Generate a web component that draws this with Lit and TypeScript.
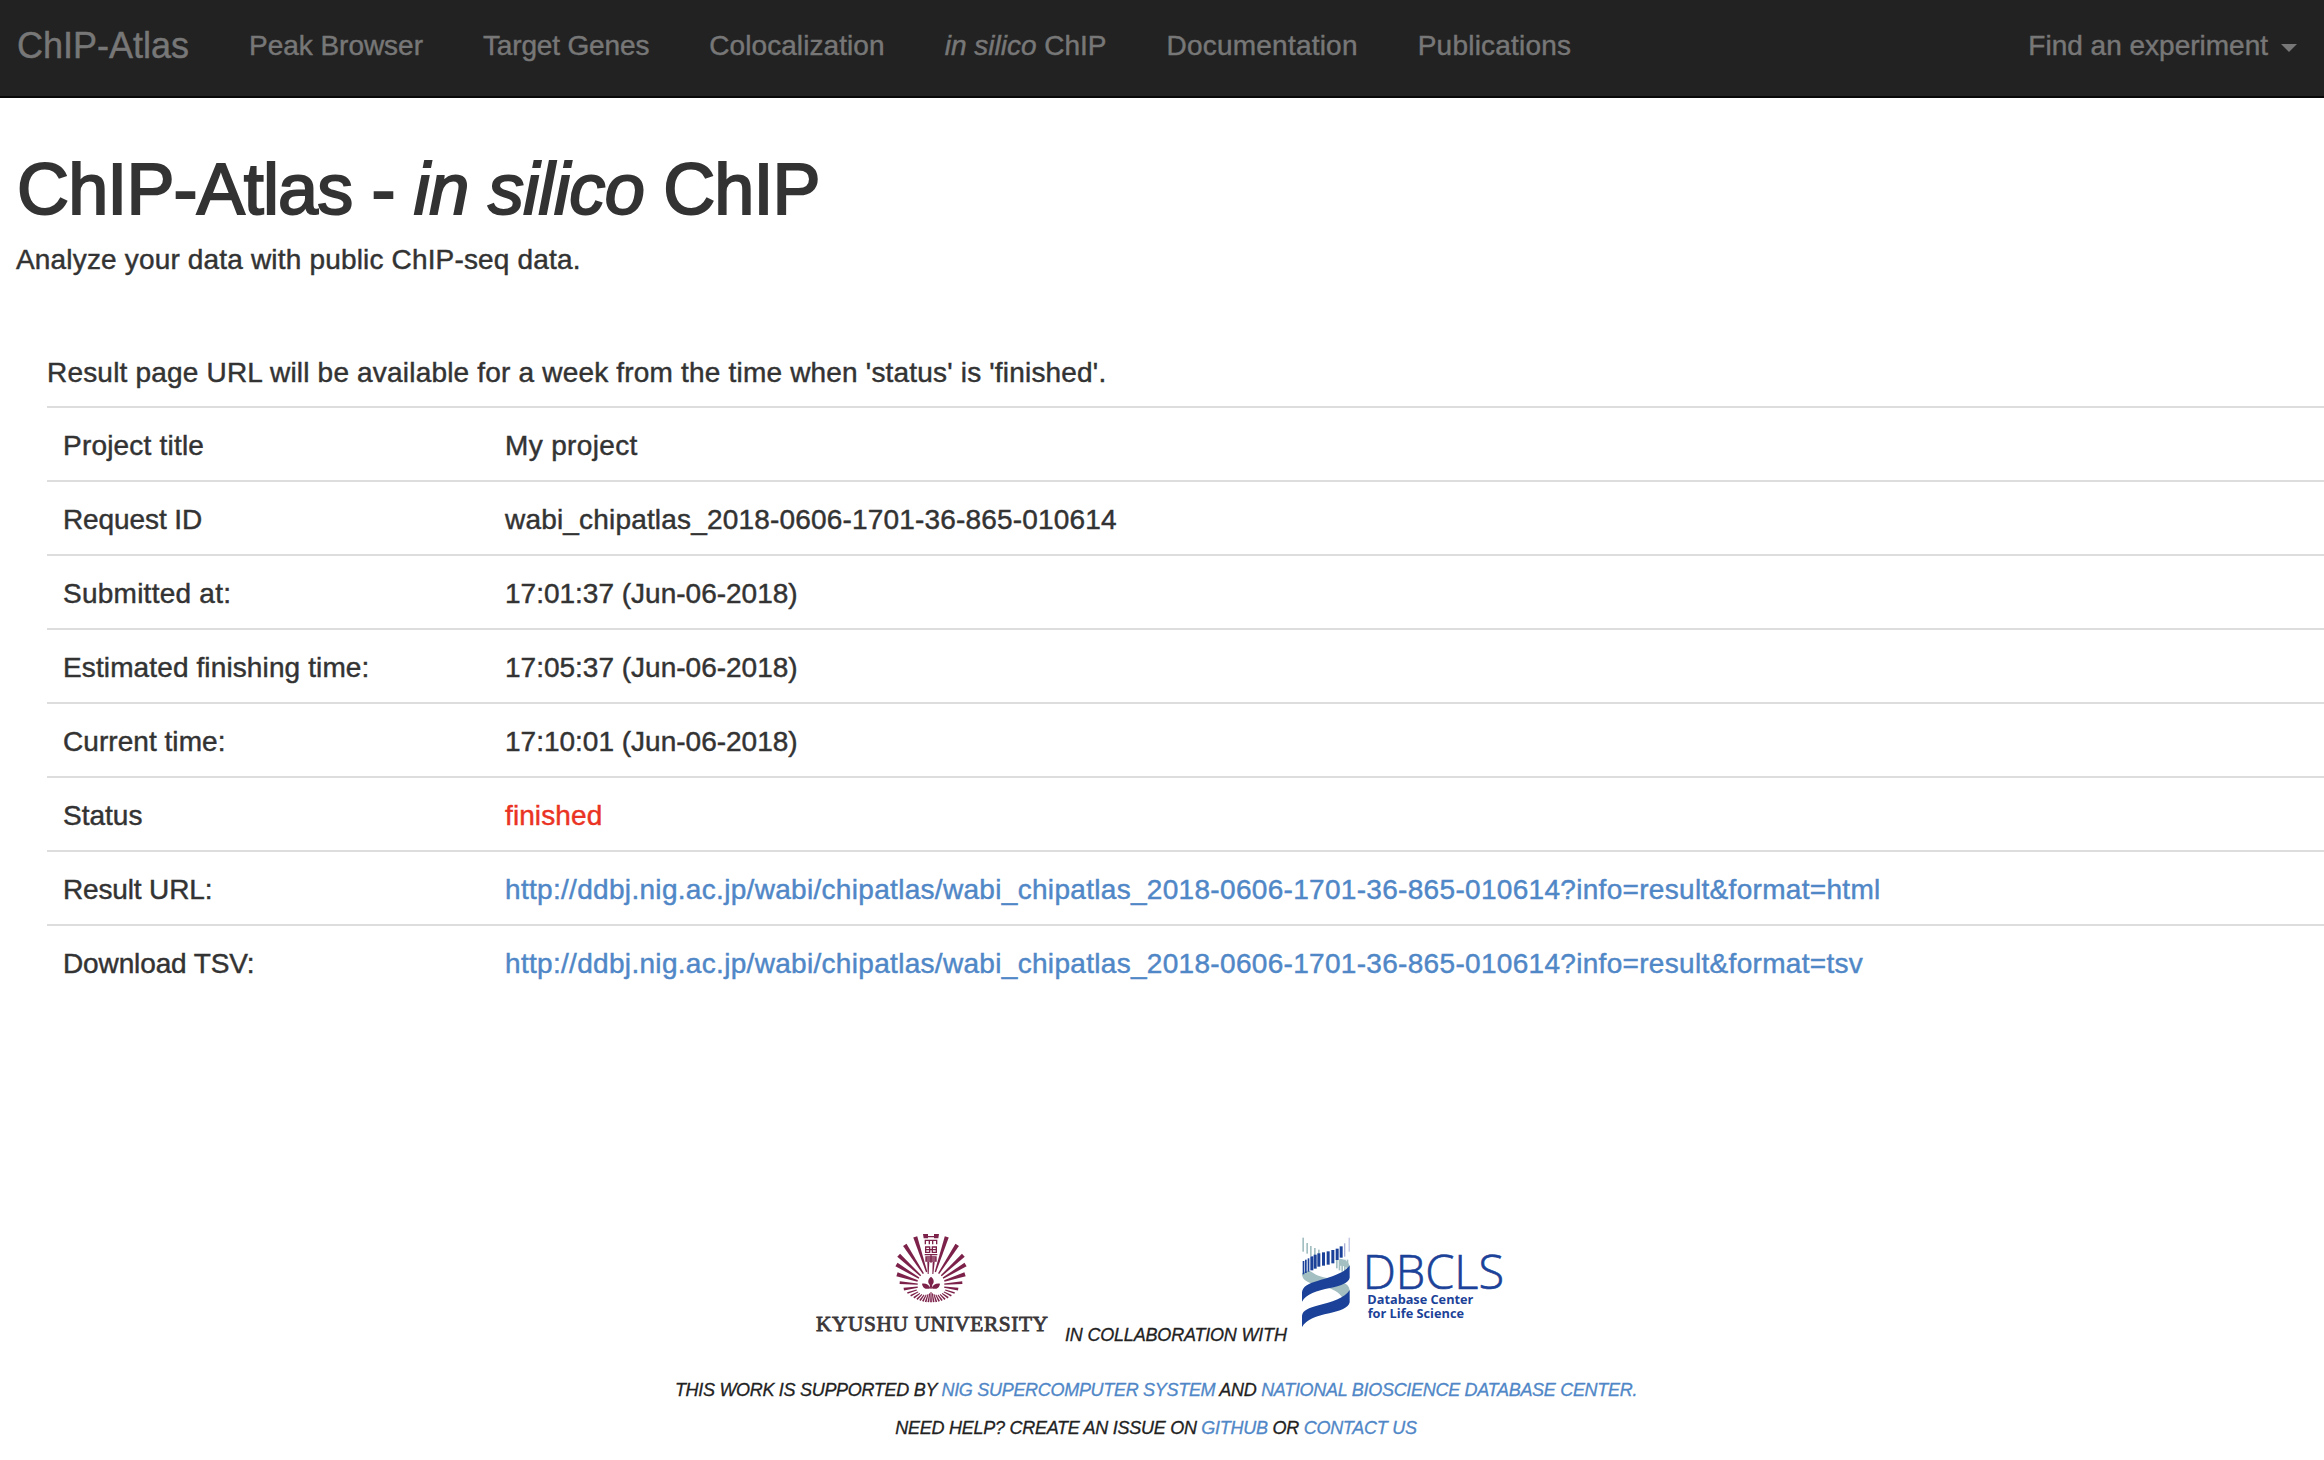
import { LitElement, html, svg, css } from "lit";
import { customElement } from "lit/decorators.js";
import { styleMap } from "lit/directives/style-map.js";

const FOCUS = { x: 393, y: 196 };
const RING = { x: 393, y: 143, r: 104 };

/** Wedge from the focus outwards, ending on the ring. */
function ray(deg: number, inner: number, spreadOuter: number, spreadInner: number) {
  const a = (deg * Math.PI) / 180;
  const dx = Math.cos(a);
  const dy = -Math.sin(a);
  const fy = FOCUS.y - RING.y;
  const b = dy * fy;
  const t = -b + Math.sqrt(b * b - fy * fy + RING.r * RING.r);
  const at = (d: number, s: number) =>
    `${(FOCUS.x + dx * d - dy * s).toFixed(1)},${(FOCUS.y + dy * d + dx * s).toFixed(1)}`;
  return svg`<polygon points="${at(inner, spreadInner)} ${at(t, spreadOuter)} ${at(t, -spreadOuter)} ${at(inner, -spreadInner)}"></polygon>`;
}

const SIDE_RAYS = [18, 31, 43, 57, 72].flatMap((d) => [d, 180 - d]);
const LOW_RAYS = [5, -8].flatMap((d) => [d, 180 - d]);
const FLOOR_RAYS = Array.from({ length: 17 }, (_, i) => 198 + i * 9);

@customElement("kyushu-logo")
export class KyushuLogo extends LitElement {
  static styles = css`
    :host { display: block; width: 234px; height: 102px; font-style: normal; }
    svg { display: block; width: 100%; height: 100%; overflow: visible; }
    .mark { fill: #7c2149; }
    .line { fill: none; stroke: #7c2149; stroke-width: 4; }
    .word { font-family: "Liberation Serif", serif; font-size: 64px; fill: #3b3739; stroke: #3b3739; stroke-width: 2.4; }
  `;
  render() {
    return html`<svg viewBox="45 36 702 306">
      <g class="mark">
        ${SIDE_RAYS.map((d) => ray(d, 42, 6.2, 2))}
        ${LOW_RAYS.map((d) => ray(d, 40, 4.4, 2))}
        ${FLOOR_RAYS.map((d) => ray(d, 20 + 26 * Math.abs(Math.cos((d * Math.PI) / 180)), 2.6, 1.4))}
        <path d="M369 42h15v13h-13zM402 42h15l-2 13h-13z"></path>
        <path d="M393 170c10 8 10 17 4 24l-2 12h-4l-2-12c-6-7-6-16 4-24z"></path>
        <path d="M366 191c12-2 22 4 25 14-11 4-23 1-25-14zM420 191c-12-2-22 4-25 14 11 4 23 1 25-14z"></path>
        <path d="M382 126h6l-2 36h-3zM398 126h6l-4 36h-3z"></path>
      </g>
      <g class="line">
        <path d="M384 50h18M376 73v-12h34v12M388 61v12M398 61v12"></path>
        <path d="M377 81h12v16h-12zM397 81h12v16h-12zM377 89h32M374 104h38M378 111h30v12h-30zM378 117h30M393 102v26"></path>
      </g>
      <text class="word" x="48" y="332" textLength="696" lengthAdjust="spacing">KYUSHU UNIVERSITY</text>
    </svg>`;
  }
}

const PALE_BARS = [
  [67, 50, 42], [79, 66, 32], [90, 75, 30], [102, 81, 28], [114, 86, 20],
  [168, 112, 30], [176, 116, 32], [184, 118, 34], [192, 116, 34], [200, 116, 30],
];
const DEEP_BARS = [
  [68, 120, 40], [75, 116, 40], [83, 112, 40], [91, 106, 42], [101, 101, 42], [112, 97, 40],
  [126, 94, 40], [140, 91, 40], [154, 87, 40], [167, 83, 34], [179, 76, 34],
];

@customElement("dbcls-logo")
export class DbclsLogo extends LitElement {
  static styles = css`
    :host { display: block; width: 201px; height: 91px; font-style: normal; }
    svg { display: block; width: 100%; height: 100%; overflow: visible; }
    .deep { fill: #1b4298; }
    .pale { fill: #a3bfc2; }
    .haze { fill: #aab0d8; }
    .name { font-family: "Open Sans", sans-serif; font-weight: 300; font-size: 142px; fill: #1b4298; stroke: #1b4298; stroke-width: 2; }
    .sub { font-family: "Open Sans", sans-serif; font-weight: 700; font-size: 38px; fill: #1b4298; }
  `;
  render() {
    return html`<svg viewBox="66 48 603 273">
      <g class="pale">
        ${PALE_BARS.map(([x, y, h]) => svg`<rect x=${x} y=${y} width="5" height=${h}></rect>`)}
        <path d="M66 158C74 150 84 147 94 152C112 166 134 170 152 172L96 187C76 182 66 172 66 158Z"></path>
        <path d="M178 113C196 114 208 124 209 138L208 148C204 140 192 134 180 134Z"></path>
        <path d="M130 197L184 183C200 188 209 196 209 210C208 220 200 227 188 231C178 214 156 201 130 197Z"></path>
      </g>
      <g class="haze">
        <rect x="192" y="67" width="4" height="40"></rect>
        <rect x="206" y="50" width="3" height="42"></rect>
      </g>
      <g class="deep">
        ${DEEP_BARS.map(([x, y, h]) => svg`<rect x=${x} y=${y} width=${x < 90 ? 5 : 9} height=${h}></rect>`)}
        <path d="M66 242V214C68 196 84 188 112 180C150 168 196 156 209 133V170C206 186 182 194 150 201C110 209 78 220 66 242Z"></path>
        <path d="M66 318V284C68 268 86 261 116 253C152 243 196 231 209 207V244C206 260 180 270 148 277C108 285 80 296 66 318Z"></path>
      </g>
      <text class="name" x="248" y="203" textLength="424" lengthAdjust="spacingAndGlyphs">DBCLS</text>
      <text class="sub" x="262" y="249" textLength="318" lengthAdjust="spacingAndGlyphs">Database Center</text>
      <text class="sub" x="263" y="291" textLength="289" lengthAdjust="spacingAndGlyphs">for Life Science</text>
    </svg>`;
  }
}

const RESULT = "http://ddbj.nig.ac.jp/wabi/chipatlas/wabi_chipatlas_2018-0606-1701-36-865-010614?info=result&format=";

/** Letter spacing in pixels, kept with each string. */
const tracking = (px = 0) => styleMap({ letterSpacing: `${px}px` });

const LINKS: { text: unknown; track?: number }[] = [
  { text: "Peak Browser", track: -0.03 },
  { text: "Target Genes", track: -0.15 },
  { text: "Colocalization", track: 0.08 },
  { text: html`<i>in silico</i> ChIP` },
  { text: "Documentation", track: 0.22 },
  { text: "Publications", track: 0.22 },
];

const ROWS: { label: string; labelTrack?: number; value: unknown; valueTrack?: number }[] = [
  { label: "Project title", labelTrack: 0.2, value: "My project", valueTrack: 0.35 },
  { label: "Request ID", labelTrack: -0.1, value: "wabi_chipatlas_2018-0606-1701-36-865-010614", valueTrack: 0.18 },
  { label: "Submitted at:", labelTrack: 0.25, value: "17:01:37 (Jun-06-2018)" },
  { label: "Estimated finishing time:", labelTrack: 0.12, value: "17:05:37 (Jun-06-2018)" },
  { label: "Current time:", labelTrack: 0.05, value: "17:10:01 (Jun-06-2018)" },
  { label: "Status", value: html`<span class="done">finished</span>`, valueTrack: 0.1 },
  { label: "Result URL:", labelTrack: -0.15, value: html`<a>${RESULT}html</a>`, valueTrack: 0.31 },
  { label: "Download TSV:", labelTrack: -0.12, value: html`<a>${RESULT}tsv</a>`, valueTrack: 0.31 },
];

@customElement("app-root")
export class AppRoot extends LitElement {
  static styles = css`
    :host {
      display: block; height: 1460px; overflow: hidden; background: #fff; color: #333;
      font-family: "Liberation Sans", Arial, sans-serif; font-size: 28px; line-height: 40px;
      -webkit-text-stroke: 0.45px currentColor;
    }
    * { box-sizing: border-box; }
    a { color: #5087c7; }
    .navbar {
      display: flex; align-items: center; height: 98px; padding: 0 27px 4px 17px;
      background: #222; border-bottom: 2px solid #080808; color: #777;
    }
    .brand { font-size: 36px; width: 202px; letter-spacing: 0; }
    .links { display: flex; flex: 1; }
    .link { padding: 0 30px; white-space: nowrap; }
    .find { display: flex; align-items: center; gap: 13px; }
    .caret { border: 8px solid transparent; border-top-color: #777; border-bottom: 0; margin-top: 3px; }
    .head { padding: 52px 16px 0; }
    h1 {
      margin: 0; padding-left: 1px; font-size: 72px; line-height: 79px; font-weight: 400; letter-spacing: -0.87px;
      -webkit-text-stroke: 2px #333;
    }
    h1 i { letter-spacing: -0.65px; }
    .lead { margin: 11px 0 0; letter-spacing: 0.17px; }
    .body { padding: 73px 0 0 47px; }
    .note { margin: 0 0 13px; letter-spacing: 0.19px; }
    .row { display: grid; grid-template-columns: 442px 1fr; border-top: 2px solid #ddd; }
    .cell { padding: 18px 16px 14px; white-space: nowrap; }
    .done { color: #ea3323; }
    footer {
      margin-top: 234px; padding-right: 12px; font-size: 18px; line-height: 26px;
      font-style: italic; text-align: center; color: #222; letter-spacing: -0.3px;
      -webkit-text-stroke: 0.3px currentColor;
    }
    .logos { display: flex; justify-content: center; align-items: flex-end; padding-left: 6px; letter-spacing: 0; -webkit-text-stroke: 0; }
    .collab { margin: 0 15px 0 16px; width: 222px; text-align: left; white-space: nowrap; letter-spacing: -0.19px; -webkit-text-stroke: 0.3px currentColor; }
    .dbcls { margin-bottom: 20px; }
    .kyushu { margin-bottom: 14px; }
    .line { margin: 29px 0 0; }
    .line + .line { margin-top: 12px; letter-spacing: -0.27px; }
  `;
  render() {
    return html`
      <nav class="navbar">
        <div class="brand">ChIP-Atlas</div>
        <div class="links">
          ${LINKS.map((l) => html`<span class="link" style=${tracking(l.track)}>${l.text}</span>`)}
        </div>
        <div class="find">Find an experiment<span class="caret"></span></div>
      </nav>
      <header class="head">
        <h1>ChIP-Atlas - <i>in silico</i> ChIP</h1>
        <p class="lead">Analyze your data with public ChIP-seq data.</p>
      </header>
      <main class="body">
        <p class="note">Result page URL will be available for a week from the time when 'status' is 'finished'.</p>
        ${ROWS.map((r) => html`<div class="row">
          <div class="cell" style=${tracking(r.labelTrack)}>${r.label}</div>
          <div class="cell" style=${tracking(r.valueTrack)}>${r.value}</div>
        </div>`)}
      </main>
      <footer>
        <div class="logos">
          <kyushu-logo class="kyushu"></kyushu-logo>
          <span class="collab">IN COLLABORATION WITH</span>
          <dbcls-logo class="dbcls"></dbcls-logo>
        </div>
        <p class="line">THIS WORK IS SUPPORTED BY <a>NIG SUPERCOMPUTER SYSTEM</a> AND <a>NATIONAL BIOSCIENCE DATABASE CENTER.</a></p>
        <p class="line">NEED HELP? CREATE AN ISSUE ON <a>GITHUB</a> OR <a>CONTACT US</a></p>
      </footer>
    `;
  }
}
